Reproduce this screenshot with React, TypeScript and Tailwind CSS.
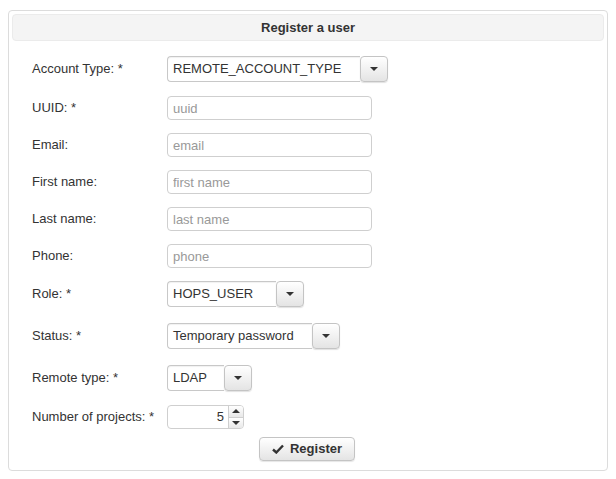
import React from "react";

const font = { fontFamily: '"Liberation Sans", Arial, sans-serif' };

interface SelectProps {
	value: string;
	width: string;
}

const Caret = () => (
	<span className="block h-0 w-0 border-x-[4px] border-t-[4px] border-x-transparent border-t-[#333]" />
);

const FakeSelect: React.FC<SelectProps> = ({ value, width }) => (
	<div className={`flex h-[26px] ${width}`}>
		<div className="flex flex-1 items-center rounded-l-[4px] border border-r-0 border-[#c8c8c8] bg-white pl-[5px] text-[13px] text-[#333] shadow-[inset_0_1px_1px_rgba(0,0,0,0.06)]">
			{value}
		</div>
		<div className="flex w-[28px] items-center justify-center rounded-[4px] border border-[#c4c4c4] bg-gradient-to-b from-white to-[#e4e4e4] shadow-[0_1px_1px_rgba(0,0,0,0.12)]">
			<Caret />
		</div>
	</div>
);

const TextInput: React.FC<{ placeholder: string }> = ({ placeholder }) => (
	<input
		className="h-[24px] w-[205px] rounded-[4px] border border-[#cfcfcf] bg-white pl-[5px] text-[13px] text-[#333] placeholder:text-[#999] focus:outline-none"
		style={font}
		placeholder={placeholder}
	/>
);

const Row: React.FC<{ label: string; className?: string; children: React.ReactNode }> = ({
	label,
	className = "",
	children,
}) => (
	<div className={`flex items-center ${className}`}>
		<label className="w-[135px] text-[13px] text-[#333]">{label}</label>
		{children}
	</div>
);

export default function App() {
	return (
		<div className="h-[479px] w-[616px] bg-white pl-[8px] pt-[10px]" style={font}>
			<div className="h-[461px] w-[600px] rounded-[4px] border border-[#dcdcdc] p-[3px]">
				<div className="flex h-[27px] items-center justify-center rounded-[4px] border border-[#ebebeb] bg-[#f4f4f4] text-[13px] font-bold text-[#333]">
					Register a user
				</div>

				<div className="flex flex-col pl-[20px]">
					<Row label="Account Type: *" className="mt-[15px]">
						<FakeSelect value="REMOTE_ACCOUNT_TYPE" width="w-[221px]" />
					</Row>
					<Row label="UUID: *" className="mt-[14px]">
						<TextInput placeholder="uuid" />
					</Row>
					<Row label="Email:" className="mt-[13px]">
						<TextInput placeholder="email" />
					</Row>
					<Row label="First name:" className="mt-[13px]">
						<TextInput placeholder="first name" />
					</Row>
					<Row label="Last name:" className="mt-[13px]">
						<TextInput placeholder="last name" />
					</Row>
					<Row label="Phone:" className="mt-[13px]">
						<TextInput placeholder="phone" />
					</Row>
					<Row label="Role: *" className="mt-[13px]">
						<FakeSelect value="HOPS_USER" width="w-[137px]" />
					</Row>
					<Row label="Status: *" className="mt-[16px]">
						<FakeSelect value="Temporary password" width="w-[173px]" />
					</Row>
					<Row label="Remote type: *" className="mt-[16px]">
						<FakeSelect value="LDAP" width="w-[85px]" />
					</Row>
					<Row label="Number of projects: *" className="mt-[14px]">
						<div className="flex h-[24px] w-[77px] rounded-[4px] border border-[#cfcfcf] bg-white">
							<div className="flex flex-1 items-center justify-end pr-[4px] text-[13px] text-[#333]">5</div>
							<div className="flex w-[15px] flex-col">
								<div className="flex flex-1 items-center justify-center rounded-tr-[3px] border-b border-l border-[#cfcfcf] bg-gradient-to-b from-white to-[#e8e8e8]">
									<span className="block h-0 w-0 border-x-[4px] border-b-[4px] border-x-transparent border-b-[#333]" />
								</div>
								<div className="flex flex-1 items-center justify-center rounded-br-[3px] border-l border-[#cfcfcf] bg-gradient-to-b from-white to-[#e8e8e8]">
									<Caret />
								</div>
							</div>
						</div>
					</Row>
				</div>

				<div className="mt-[8px] flex justify-center pr-[2px]">
					<button className="flex h-[24px] w-[96px] items-center justify-center gap-[6px] rounded-[4px] border border-[#c4c4c4] bg-gradient-to-b from-white to-[#e4e4e4] text-[13px] font-bold text-[#333] shadow-[0_1px_1px_rgba(0,0,0,0.1)]">
						<svg width="12" height="10" viewBox="0 0 12 10">
							<path d="M1 5.5 L4.3 8.5 L11 1.5" fill="none" stroke="#333" strokeWidth="2.4" />
						</svg>
						Register
					</button>
				</div>
			</div>
		</div>
	);
}
